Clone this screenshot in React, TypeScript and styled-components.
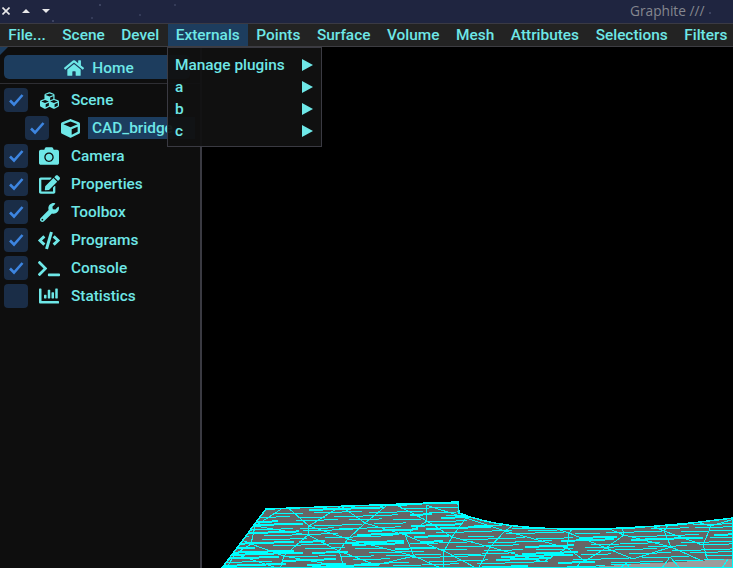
import React from "react"
import styled, { createGlobalStyle } from "styled-components"
import { FaHome, FaCubes, FaCube, FaCamera, FaEdit, FaWrench, FaCode, FaTerminal, FaChartBar } from "react-icons/fa"

const cyan = "#6ee7e7"

const GlobalStyle = createGlobalStyle`
  html, body {
    margin: 0;
    padding: 0;
    background: #000;
    overflow: hidden;
  }
  * { box-sizing: border-box; }
`

const Page = styled.div`
  position: relative;
  width: 733px;
  height: 568px;
  display: flex;
  flex-direction: column;
  font-family: Roboto, "Liberation Sans", sans-serif;
  font-weight: 500;
  font-size: 15.4px;
  color: ${cyan};
  overflow: hidden;
`

const TitleBar = styled.div`
  height: 24px;
  flex: none;
  display: flex;
  align-items: center;
  justify-content: space-between;
  padding: 0 7px 2px 2px;
  border-bottom: 1px solid #3a3a44;
  background-color: #1f2540;
  background-image:
    radial-gradient(circle at 100px 5px, #3c4360 1px, transparent 1.5px),
    radial-gradient(circle at 175px 5px, #343b58 1px, transparent 1.5px),
    radial-gradient(circle at 140px 15px, #343b58 1px, transparent 1.5px),
    radial-gradient(circle at 92px 18px, #343b58 1px, transparent 1.5px),
    radial-gradient(circle at 53px 21px, #3c4360 1px, transparent 1.5px),
    radial-gradient(circle at 710px 13px, #3c4360 1px, transparent 1.5px);
`

const WindowButtons = styled.div`
  display: flex;
  align-items: center;
  gap: 8px;
`

const WindowTitle = styled.div`
  font-family: "Open Sans", sans-serif;
  font-weight: 400;
  font-size: 13.7px;
  color: #85878f;
  width: 96px;
`

const MenuBar = styled.div`
  height: 23px;
  flex: none;
  display: flex;
  align-items: center;
  background: #232323;
  border-bottom: 1px solid #3d3d42;
`

const MenuItem = styled.div<{ $open?: boolean }>`
  height: 22px;
  display: flex;
  align-items: center;
  padding: 0 8.3px;
  white-space: nowrap;
  background: ${(p) => (p.$open ? "#1d3d5e" : "transparent")};
`

const Body = styled.div`
  flex: 1;
  display: flex;
  min-height: 0;
`

const Sidebar = styled.div`
  position: relative;
  width: 202px;
  flex: none;
  background: #0e0e0e;
  border-right: 2px solid #3a3a42;
  padding-top: 8px;
`

const CornerMark = styled.div`
  position: absolute;
  left: 0;
  top: 0;
  width: 0;
  height: 0;
  border-top: 8px solid #1d3d5e;
  border-right: 8px solid transparent;
`

const HomeButton = styled.div`
  margin-left: 4px;
  width: 186px;
  height: 24px;
  padding: 1px 0 0 4px;
  border-radius: 5px;
  background: #1d3d5e;
  display: flex;
  align-items: center;
  justify-content: center;
  gap: 8px;
`

const Separator = styled.div`
  height: 1px;
  background: #2e2e33;
  margin-top: 4px;
  margin-bottom: 2px;
`

const Row = styled.div<{ $indent?: boolean }>`
  height: 28px;
  display: flex;
  align-items: center;
  padding-left: ${(p) => (p.$indent ? "25px" : "4px")};
`

const CheckBox = styled.div`
  width: 24px;
  height: 24px;
  flex: none;
  border-radius: 4px;
  background: #1a2d47;
  display: flex;
  align-items: center;
  justify-content: center;
`

const IconSlot = styled.div`
  width: 22px;
  margin-left: 10px;
  flex: none;
  display: flex;
  justify-content: center;
  align-items: center;
`

const RowLabel = styled.div`
  margin-left: 11px;
  white-space: nowrap;
`

const SelectedLabel = styled.div`
  margin-left: 7px;
  width: 107px;
  height: 22px;
  padding-left: 4px;
  line-height: 22px;
  background: #1c3d5f;
  white-space: nowrap;
  overflow: hidden;
`

const Viewport = styled.div`
  flex: 1;
  background: #000;
  min-width: 0;

  svg {
    display: block;
  }
`

const Dropdown = styled.div`
  position: absolute;
  left: 167px;
  top: 47px;
  width: 155px;
  height: 100px;
  padding: 6px 8px 0 7px;
  background: rgba(17, 17, 17, 0.94);
  border: 1px solid #3a3a42;
`

const DropdownRow = styled.div`
  height: 22px;
  display: flex;
  align-items: center;
  justify-content: space-between;
  white-space: nowrap;
`

const Arrow = styled.div`
  width: 0;
  height: 0;
  border-left: 11px solid ${cyan};
  border-top: 6px solid transparent;
  border-bottom: 6px solid transparent;
`

const Check = () => (
  <svg width="18" height="18" viewBox="0 0 18 18">
    <polyline points="3,9.5 7,13.5 15.5,4" fill="none" stroke="#3d85e0" strokeWidth="2.6" />
  </svg>
)

const menus = ["File...", "Scene", "Devel", "Externals", "Points", "Surface", "Volume", "Mesh", "Attributes", "Selections", "Filters"]

const rows = [
  { label: "Scene", icon: <FaCubes size={19} /> },
  { label: "CAD_bridge", icon: <FaCube size={19} />, indent: true },
  { label: "Camera", icon: <FaCamera size={20} /> },
  { label: "Properties", icon: <FaEdit size={21} /> },
  { label: "Toolbox", icon: <FaWrench size={19} /> },
  { label: "Programs", icon: <FaCode size={23} /> },
  { label: "Console", icon: <FaTerminal size={23} /> },
  { label: "Statistics", icon: <FaChartBar size={20} />, off: true },
]

// viewport coordinates: page x - 202, page y - 47
const outline = "M20 521L64 462L256 455L257 466C285 477 320 482 375 482C430 482 480 478 531 471L531 521Z"

const lightPart = "374,521 420,518 531,512 531,521"

const makeLines = () => {
  let seed = 11
  const rnd = () => {
    seed = (seed * 16807) % 2147483647
    return seed / 2147483647
  }
  let thinDashes = ""
  let thickDashes = ""
  // stacked horizontal dashes: the nearly flat triangles of the far mesh
  for (let y = 456; y < 540; y += 3.6) {
    let x = 10 + rnd() * 20
    while (x < 560) {
      const w = 22 + rnd() * 55
      const y0 = Math.round(y + rnd() * 2 - x * 0.02 + 5)
      const seg = `M${x.toFixed(0)} ${y0}L${(x + w).toFixed(0)} ${(y0 - w * 0.035).toFixed(1)}`
      if (rnd() < 0.3) thickDashes += seg
      else thinDashes += seg
      x += w + 4 + rnd() * 18
    }
  }
  // coarse net of the larger triangles
  const nodes: { x: number; y: number }[][] = []
  for (let j = 0; j < 5; j++) {
    const line: { x: number; y: number }[] = []
    for (let i = 0; i < 11; i++) {
      line.push({ x: 25 + i * 52 + (rnd() - 0.5) * 30 - j * 12, y: 462 + j * 16 - i * 1.2 + (rnd() - 0.5) * 8 })
    }
    nodes.push(line)
  }
  let net = ""
  for (let j = 0; j < 4; j++) {
    for (let i = 0; i < 11; i++) {
      const a = nodes[j][i]
      const b = nodes[j + 1][i]
      net += `M${a.x.toFixed(0)} ${a.y.toFixed(0)}L${b.x.toFixed(0)} ${b.y.toFixed(0)}`
      if (i < 10) {
        const c = nodes[j + 1][i + 1]
        net += `M${a.x.toFixed(0)} ${a.y.toFixed(0)}L${c.x.toFixed(0)} ${c.y.toFixed(0)}`
      }
    }
  }
  return { thinDashes, thickDashes, net }
}

const Mesh = () => {
  const { thinDashes, thickDashes, net } = makeLines()
  return (
    <svg width="531" height="521" viewBox="0 0 531 521" shapeRendering="crispEdges">
      <defs>
        <clipPath id="meshClip">
          <path d={outline} />
        </clipPath>
      </defs>
      <path d={outline} fill="#666666" />
      <g clipPath="url(#meshClip)" stroke="#00ffff" fill="none">
        <path d={thinDashes} strokeWidth="1" />
        <path d={thickDashes} strokeWidth="2" />
        <path d={net} strokeWidth="1" />
      </g>
      <polygon points={lightPart} fill="#9c9c9c" />
      <path
        d="M374 521L378 516M418 521L424 516M428 521L424 516M460 521L468 510M478 521L468 510M520 521L526 512M540 510L531 521"
        stroke="#00ffff"
        fill="none"
      />
      <path d={outline} fill="none" stroke="#00ffff" strokeWidth="1.5" />
    </svg>
  )
}

export default function App() {
  return (
    <Page>
      <GlobalStyle />
      <TitleBar>
        <WindowButtons>
          <svg width="8" height="8" viewBox="0 0 8 8">
            <path d="M0.5 0.5L7.5 7.5M7.5 0.5L0.5 7.5" stroke="#e8e8ea" strokeWidth="1.6" />
          </svg>
          <svg width="12" height="6" viewBox="0 0 12 6" style={{ marginLeft: 2 }}>
            <path d="M6 1L10 5H2Z" fill="#e8e8ea" />
          </svg>
          <svg width="12" height="6" viewBox="0 0 12 6">
            <path d="M2 1H10L6 5Z" fill="#e8e8ea" />
          </svg>
        </WindowButtons>
        <WindowTitle>Graphite ///</WindowTitle>
      </TitleBar>
      <MenuBar>
        {menus.map((m) => (
          <MenuItem key={m} $open={m === "Externals"}>
            {m}
          </MenuItem>
        ))}
      </MenuBar>
      <Body>
        <Sidebar>
          <CornerMark />
          <HomeButton>
            <FaHome size={20} />
            Home
          </HomeButton>
          <Separator />
          {rows.map((r) => (
            <Row key={r.label} $indent={r.indent}>
              <CheckBox>{!r.off && <Check />}</CheckBox>
              <IconSlot>{r.icon}</IconSlot>
              {r.indent ? <SelectedLabel>{r.label}</SelectedLabel> : <RowLabel>{r.label}</RowLabel>}
            </Row>
          ))}
        </Sidebar>
        <Viewport>
          <Mesh />
        </Viewport>
      </Body>
      <Dropdown>
        {["Manage plugins", "a", "b", "c"].map((d) => (
          <DropdownRow key={d}>
            {d}
            <Arrow />
          </DropdownRow>
        ))}
      </Dropdown>
    </Page>
  )
}
